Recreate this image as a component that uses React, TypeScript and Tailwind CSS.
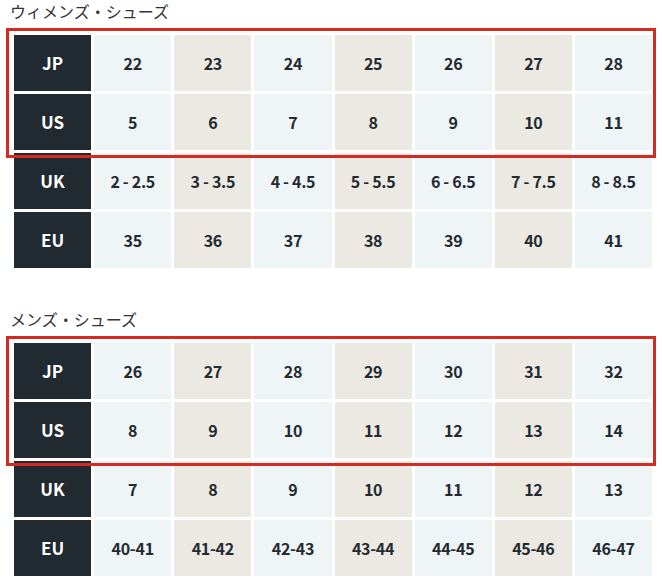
import type { ReactElement } from "react";

interface SizeTableProps {
  title: string;
  rows: { label: string; values: string[] }[];
}

const womens = [
  { label: "JP", values: ["22", "23", "24", "25", "26", "27", "28"] },
  { label: "US", values: ["5", "6", "7", "8", "9", "10", "11"] },
  { label: "UK", values: ["2 - 2.5", "3 - 3.5", "4 - 4.5", "5 - 5.5", "6 - 6.5", "7 - 7.5", "8 - 8.5"] },
  { label: "EU", values: ["35", "36", "37", "38", "39", "40", "41"] },
];

const mens = [
  { label: "JP", values: ["26", "27", "28", "29", "30", "31", "32"] },
  { label: "US", values: ["8", "9", "10", "11", "12", "13", "14"] },
  { label: "UK", values: ["7", "8", "9", "10", "11", "12", "13"] },
  { label: "EU", values: ["40-41", "41-42", "42-43", "43-44", "44-45", "45-46", "46-47"] },
];

const SizeTable = ({ title, rows }: SizeTableProps): ReactElement => {
  return (
    <section>
      <h2 className="pl-[10px] text-[16px] leading-[22px] font-normal text-[#333]">{title}</h2>
      <div className="relative mt-[13px] ml-[14px] mr-[10px]">
        <div className="grid grid-cols-8 gap-[3px]">
          {rows.map((row) => (
            <>
              <div
                key={row.label}
                className="flex h-[56px] items-center justify-center bg-[#222a31] text-[17px] font-bold text-white"
              >
                {row.label}
              </div>
              {row.values.map((value, i) => (
                <div
                  key={row.label + i}
                  className={`flex h-[56px] items-center justify-center text-[16px] font-bold text-[#232a30] tracking-[-0.3px] ${
                    i % 2 === 0 ? "bg-[#eff4f7]" : "bg-[#ece9e2]"
                  }`}
                >
                  {value}
                </div>
              ))}
            </>
          ))}
        </div>
        {/* highlight JP / US rows */}
        <div className="pointer-events-none absolute top-[-7px] left-[-8px] h-[130px] w-[650px] border-[3px] border-[#d42a1f]" />
      </div>
    </section>
  );
};

export default function App(): ReactElement {
  return (
    <div
      className="flex w-[662px] flex-col gap-[40px] bg-white"
      style={{ fontFamily: '"Noto Sans CJK JP", "Noto Sans", sans-serif' }}
    >
      <SizeTable title="ウィメンズ・シューズ" rows={womens} />
      <SizeTable title="メンズ・シューズ" rows={mens} />
    </div>
  );
}
